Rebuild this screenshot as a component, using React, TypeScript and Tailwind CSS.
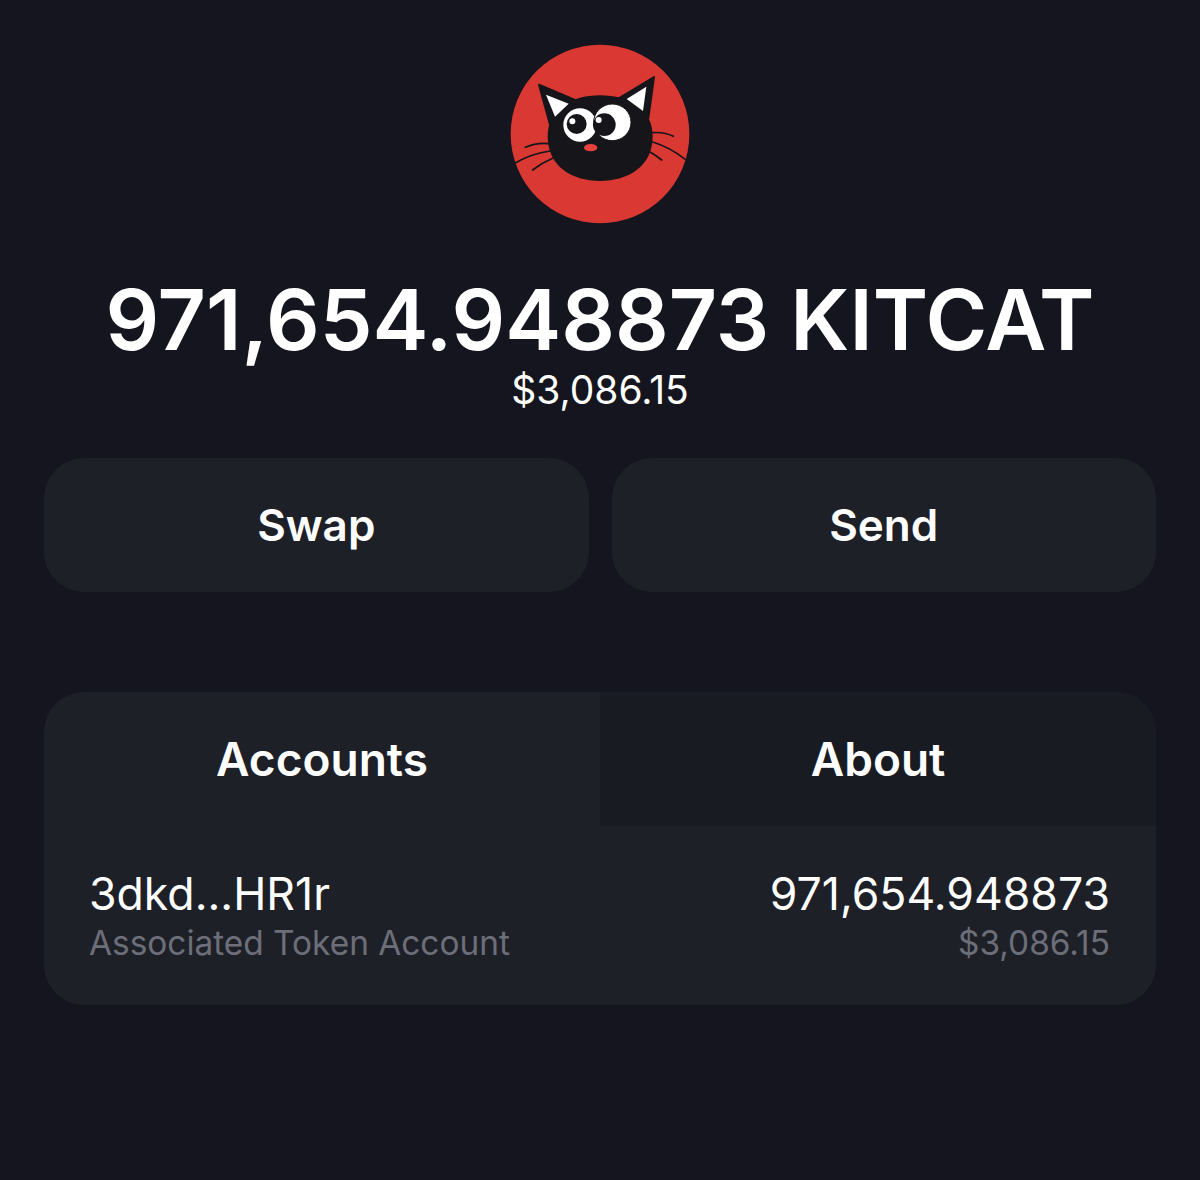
function CatLogo() {
  return (
    <svg viewBox="30 28 540 540" className="h-[180px] w-[180px]">
      <circle cx="300" cy="298" r="268" fill="#da3832" />
      <path d="M117 150 L230 198 L150 270 Z" fill="#16151a" stroke="#16151a" strokeWidth="6" strokeLinejoin="round" />
      <path d="M462 127 L350 195 L445 250 Z" fill="#16151a" stroke="#16151a" strokeWidth="6" strokeLinejoin="round" />
      <path d="M143 305 C143 225 210 182 300 182 C390 182 458 225 458 305 C458 395 385 439 300 439 C215 439 143 395 143 305 Z" fill="#16151a" />
      <path d="M138 180 L206 207 L165 246 Z" fill="#fff" />
      <path d="M439 156 L380 193 L429 229 Z" fill="#fff" />
      <circle cx="240" cy="271" r="50" fill="#fff" />
      <ellipse cx="337" cy="263" rx="56" ry="55" fill="#fff" stroke="#16151a" strokeWidth="3" />
      <circle cx="230" cy="268" r="30" fill="#16151a" />
      <circle cx="313" cy="270" r="34" fill="#16151a" />
      <circle cx="217" cy="260" r="9" fill="#fff" />
      <circle cx="296" cy="256" r="9" fill="#fff" />
      <ellipse cx="272" cy="339" rx="20" ry="11" fill="#e8423f" />
      <g fill="none" stroke="#16151a" strokeWidth="5" strokeLinecap="round">
        <path d="M76 338 Q110 323 146 327" />
        <path d="M47 384 Q95 357 150 349" />
        <path d="M98 406 Q125 385 158 371" />
        <path d="M458 294 Q492 291 520 305" />
        <path d="M458 322 Q510 338 556 374" />
        <path d="M450 352 Q468 362 485 376" />
      </g>
    </svg>
  );
}

export default function App() {
  return (
    <div className="flex h-[1180px] flex-col items-center bg-[#14151e] px-[44px] pt-[44px] font-['Inter',sans-serif] text-white">
      <CatLogo />

      <h1 className="mt-[50px] text-[84px] leading-[92px] font-semibold whitespace-nowrap">
        971,654.948873 KITCAT
      </h1>
      <p className="mt-[2px] text-[39px] leading-[44px]">$3,086.15</p>

      <div className="mt-[46px] grid w-full grid-cols-2 gap-[23px]">
        <button className="h-[134px] rounded-[40px] bg-[#1e2028] text-[44px] font-semibold">
          Swap
        </button>
        <button className="h-[134px] rounded-[40px] bg-[#1e2028] text-[44px] font-semibold">
          Send
        </button>
      </div>

      <div className="mt-[100px] w-full overflow-hidden rounded-[40px] bg-[#1e2028]">
        <div className="grid grid-cols-2">
          <div className="flex h-[134px] items-center justify-center text-[46px] font-semibold">
            Accounts
          </div>
          <div className="flex h-[134px] items-center justify-center bg-[#191b23] text-[46px] font-semibold">
            About
          </div>
        </div>
        <div className="flex h-[179px] items-start justify-between pt-[44px] pr-[46px] pl-[45px]">
          <div>
            <div className="text-[44.6px] leading-[48px]">3dkd...HR1r</div>
            <div className="mt-[4px] text-[33.4px] leading-[42px] text-[#6c6e78]">Associated Token Account</div>
          </div>
          <div className="text-right">
            <div className="text-[44.6px] leading-[48px]">971,654.948873</div>
            <div className="mt-[4px] text-[33.4px] leading-[42px] text-[#6c6e78]">$3,086.15</div>
          </div>
        </div>
      </div>
    </div>
  );
}
